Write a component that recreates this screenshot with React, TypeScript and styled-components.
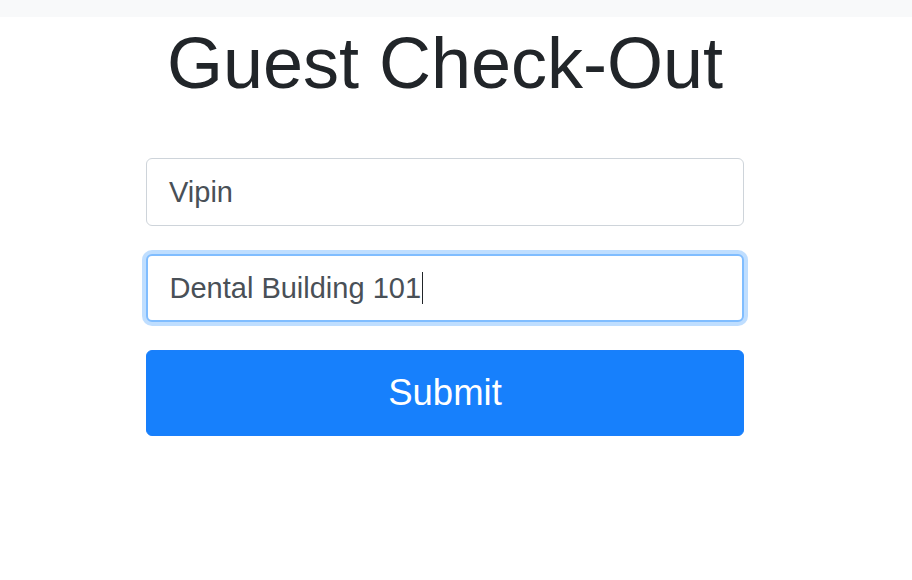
import React from "react";
import styled, { createGlobalStyle } from "styled-components";

const Global = createGlobalStyle`
  html, body { margin: 0; padding: 0; background: #fff; }
  body { font-family: "Liberation Sans", Arial, sans-serif; }
`;

const TopBar = styled.div`
  height: 17px;
  background: #f8f9fa;
`;

const Container = styled.main`
  width: 598px;
  margin: 0 0 0 146px;
  display: flex;
  flex-direction: column;
`;

const Title = styled.h1`
  margin: 4px 0 53px;
  font-size: 72px;
  line-height: 84px;
  font-weight: 400;
  color: #212529;
  text-align: center;
  white-space: nowrap;
`;

const Form = styled.form`
  display: flex;
  flex-direction: column;
  gap: 28px;
`;

const Field = styled.div<{ $focused?: boolean }>`
  box-sizing: border-box;
  height: 68px;
  display: flex;
  align-items: center;
  padding: 0 22px;
  border: ${(p) => (p.$focused ? "2px solid #80bdff" : "1.5px solid #ced4da")};
  padding-left: ${(p) => (p.$focused ? "21.5px" : "22px")};
  border-radius: 6px;
  box-shadow: ${(p) => (p.$focused ? "0 0 0 4px rgba(0,123,255,0.25)" : "none")};
  font-size: 29px;
  color: #495057;
  background: #fff;
`;

const Caret = styled.span`
  display: inline-block;
  width: 1px;
  height: 32px;
  background: #212529;
  margin-left: 1px;
`;

const SubmitButton = styled.button`
  box-sizing: border-box;
  height: 86px;
  border: 1px solid #1a7ffb;
  border-radius: 6px;
  background: #1780fc;
  color: #fff;
  font-family: "Liberation Sans", Arial, sans-serif;
  font-size: 36.5px;
  cursor: pointer;
`;

export default function App() {
  return (
    <>
      <Global />
      <TopBar />
      <Container>
        <Title>Guest Check-Out</Title>
        <Form onSubmit={(e) => e.preventDefault()}>
          <Field>Vipin</Field>
          <Field $focused>
            Dental Building 101
            <Caret />
          </Field>
          <SubmitButton type="submit">Submit</SubmitButton>
        </Form>
      </Container>
    </>
  );
}
